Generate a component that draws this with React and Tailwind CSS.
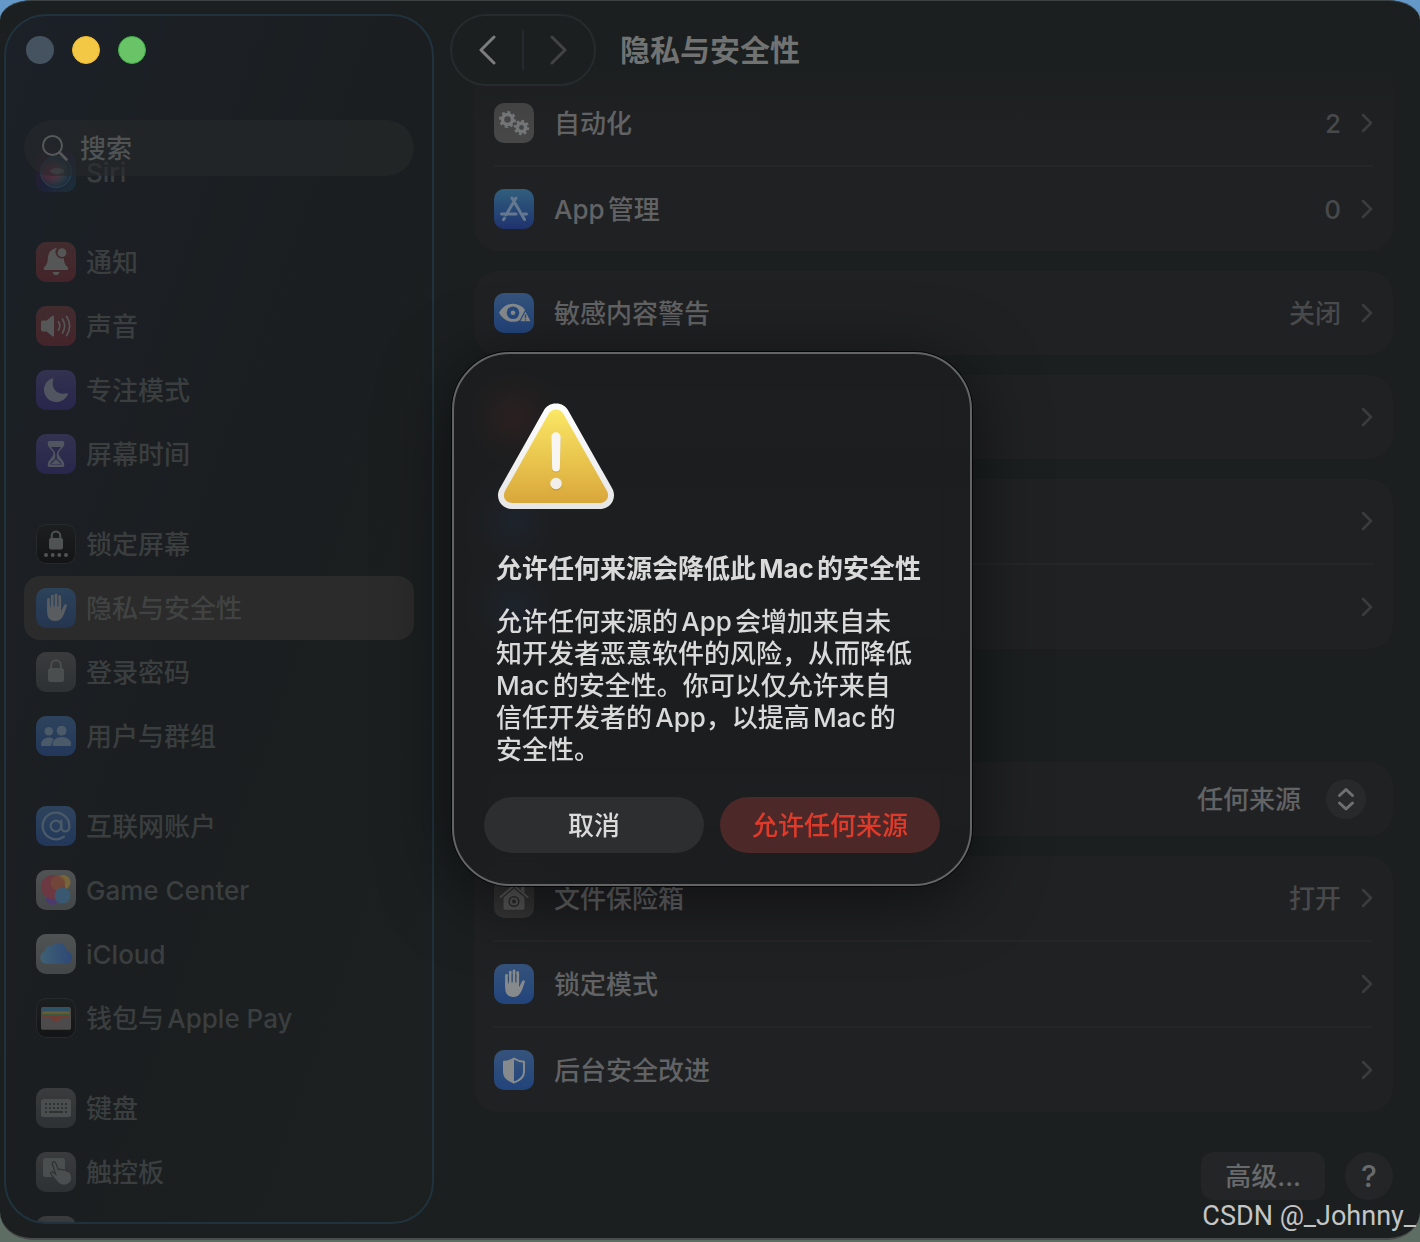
import React, { useState } from 'react';
import { AtSign } from 'lucide-react';
import clsx from 'clsx';

const BellIcon = () => (
    <g fill="currentColor">
        <path d="M18.6 6.6c.8-.5 1.6-.6 2.3-.5a6.4 6.4 0 0 0 5.6 10.3c.5 0 1-.1 1.4-.2.2 5.6 1.6 6.7 3.6 8.9 1.300 1.500.6 3-.8 3H9.200c-1.500 0-2.200-1.500-.9-3 2.600-2.800 3.300-4.200 3.600-9.400.3-4.200 2.400-7.800 6.700-9.100z" />
        <path d="M16.5 30h7c-.5 2-1.8 3.100-3.500 3.100s-3-1.100-3.500-3.100z" />
        <circle cx="26" cy="10.7" r="4.4" />
    </g>
);

const SpeakerIcon = () => (
    <>
        <path fill="currentColor" d="M7 14.500h3.600l5.600-4.700c.9-.7 1.800-.3 1.800.9v18.600c0 1.200-.9 1.600-1.800.9l-5.600-4.700H7c-1.300 0-2-.7-2-2v-7c0-1.300.7-2 2-2z" />
        <path fill="none" stroke="currentColor" strokeWidth="1.7" strokeLinecap="round" d="M22.500 15.800c1.700 2.800 1.700 5.600 0 8.400M26.500 13c2.800 4.600 2.800 9.400 0 14M30.600 10.500c4 6.300 4 12.700 0 19" />
    </>
);

const MoonIcon = () => (
    <path fill="currentColor" d="M16.500 8.200c.6-.2 1.100.2.8 1C14.600 18.500 21 25.500 31 23.200c.8-.2 1.200.4.9 1C29.900 28.900 25.500 32 20.300 32 13.400 32 8 26.600 8 19.800c0-5.400 3.400-10 8.500-11.600z" />
);

const HourglassIcon = () => (
    <>
        <path fill="currentColor" d="M13.500 7h13c1.400 0 1.800 1 1.800 2 0 5.500-5.800 7.200-5.800 10.800S28.300 26 28.300 31c0 1-.4 2-1.800 2h-13c-1.400 0-1.800-1-1.800-2 0-5 5.800-7.600 5.800-11.200S11.700 14.500 11.700 9c0-1 .4-2 1.800-2z" />
        <path fill="#2a294c" d="M15 13h10c-1 2-3.600 3.300-4.200 6.500v4.200c.8 2.500 4.400 3.400 5.100 6.800H14.100c.7-3.400 4.300-4.300 5.100-6.800v-4.200C18.600 16.300 16 15 15 13z" />
        <path fill="currentColor" d="M20 25l5 5H15z" />
    </>
);

const LockScreenIcon = () => (
    <>
        <rect x="13" y="14" width="14" height="11.5" rx="2" fill="currentColor" />
        <path fill="none" stroke="currentColor" strokeWidth="2" d="M15.700 15v-3.300a4.300 4.300 0 0 1 8.600 0V15" />
        <g fill="currentColor">
            <circle cx="10" cy="31" r="2" />
            <circle cx="16.7" cy="31" r="2" />
            <circle cx="23.3" cy="31" r="2" />
            <circle cx="30" cy="31" r="2" />
        </g>
    </>
);

const HandIcon = () => (
    <>
        <path fill="none" stroke="currentColor" strokeWidth="2.8" strokeLinecap="round" d="M12.500 11.500V22M16.300 8.200V20M20 7V20M23.700 8.700V20" />
        <path fill="currentColor" d="M11.200 17.500h13.800v5.700c1.100-1.700 2.300-4.700 3.300-6.300.9-1.300 3-.7 2.500.9-1.100 3.600-2.400 8.100-4.400 11.200-1.600 2.700-4 4-7.200 4-5 0-8-3.300-8-8.500z" />
        <path fill="none" stroke="#2c4563" strokeWidth=".7" d="M14.400 12v7.500M18.100 10v9M21.900 10v9" />
    </>
);

const LockIcon = () => (
    <>
        <rect x="12" y="16" width="16" height="14" rx="2.5" fill="currentColor" />
        <path fill="none" stroke="currentColor" strokeWidth="2" d="M15.200 17v-4a4.800 4.800 0 0 1 9.600 0v4" />
    </>
);

const UsersIcon = () => (
    <g fill="currentColor">
        <circle cx="12.8" cy="15.3" r="4.3" />
        <circle cx="25.6" cy="14.7" r="4.9" />
        <path d="M5 28.500c0-3.700 3.500-7 7.800-7 1.900 0 3.600.6 5 1.700-1.600 1.600-2.500 3.900-2.500 6.800H6.500c-1 0-1.500-.5-1.500-1.500z" />
        <path d="M16.500 28.300c0-4.300 4.100-7.400 9.300-7.400s9.400 3.100 9.400 7.400c0 1.200-.5 1.700-1.700 1.700H18.200c-1.200 0-1.700-.5-1.700-1.700z" />
    </g>
);

const GameCenterIcon = () => (
    <>
        <circle cx="27" cy="12.5" r="7.5" fill="#77663a" />
        <circle cx="16" cy="29" r="6" fill="#4b3a6e" />
        <circle cx="17" cy="17" r="12" fill="#6c3842" />
        <circle cx="22" cy="13" r="7.5" fill="#754c36" opacity=".7" />
        <circle cx="26.5" cy="25.5" r="8" fill="#395a74" opacity=".95" />
    </>
);

const CloudIcon = () => (
    <>
        <defs>
            <linearGradient id="cloud" x1="0" x2="1">
                <stop offset="0" stopColor="#3f6074" />
                <stop offset="1" stopColor="#2e4876" />
            </linearGradient>
        </defs>
        <path fill="url(#cloud)" d="M11.500 30C7.300 30 4.300 27.200 4.300 23.500c0-3 1.800-5.300 4.400-6.200.2-3.200 2.500-5.300 5.400-5.300.7 0 1.300.1 1.900.3 1.400-2.200 3.600-3.500 6.300-3.500 4.600 0 7.900 3.300 8.200 7.800 3.400.7 5.500 3.200 5.500 6.400 0 4-2.900 7-7 7z" />
    </>
);

const WalletIcon = () => (
    <>
        <rect x="5" y="9" width="30" height="22.5" rx="2" fill="#4c4a4b" />
        <path fill="#2f5266" d="M6.500 10h27v4h-27z" />
        <path fill="#6b5f33" d="M6.500 13.500h27V17h-27z" />
        <path fill="#3e5b40" d="M6.500 15.500h27v2h-27z" />
        <path fill="#6d3c34" d="M6.500 17.200h27v7h-27z" />
        <path fill="#4c4a4b" d="M5 20h8c2.500 0 3.200 3.800 7 3.800s4.500-3.800 7-3.800h8v10c0 1-.6 1.500-1.500 1.500h-27C5.600 31.500 5 31 5 30z" />
    </>
);

const KeyboardIcon = () => (
    <>
        <rect x="5" y="11" width="30" height="18" rx="2.5" fill="currentColor" />
        <path stroke="#303335" strokeWidth="2" strokeDasharray="2 2" d="M9 16h22M9 20h22" />
        <path stroke="#303335" strokeWidth="2" d="M9 24h2M13 24h14M29 24h2" />
    </>
);

const TrackpadIcon = () => (
    <>
        <rect x="7" y="6" width="22" height="19" rx="2.5" fill="currentColor" />
        <path fill="currentColor" stroke="#303335" strokeWidth="1.2" d="M16.400 12.200c-.8-2.400 2.400-3.500 3.300-1.200l2.600 6.700c.9-.9 2.300-.8 2.900.2.900-.7 2.200-.5 2.700.4 1.100-.6 2.300-.2 2.900.9l.8-.1c1.800-.1 2.800 1.300 3.500 3.300 1.700 5-.1 8.900-4.600 10.500-4.400 1.500-7.200-.4-9.500-3.300-1.900-2.400-4.300-5-6.100-7.400-1.200-1.700.7-3 2.200-1.900l2.600 2z" />
    </>
);

const GearShape = ({ cx, cy, r }) => (
    <>
        <circle cx={cx} cy={cy} r={r} fill="none" stroke="currentColor" strokeWidth="3.5" />
        <circle cx={cx} cy={cy} r={r + 2.2} fill="none" stroke="currentColor" strokeWidth="2.6" pathLength="16" strokeDasharray="1 1" />
    </>
);

const GearsIcon = () => (
    <>
        <GearShape cx={13.5} cy={16.5} r={5} />
        <GearShape cx={27.5} cy={24.5} r={4.2} />
    </>
);

const AppStoreIcon = () => (
    <path fill="none" stroke="currentColor" strokeWidth="3" strokeLinecap="round" d="M18 9L30.500 30.500M22 9L12 26M10.400 29.200l-.9 1.500M7.500 25h14.500M29.500 25h3" />
);

const EyeIcon = () => (
    <>
        <path fill="currentColor" d="M5 19.700C8 14.200 13 10.700 19 10.700s11 3.500 14 9c-3 5.600-8 9.100-14 9.100S8 25.300 5 19.700z" />
        <circle cx="19" cy="19.7" r="6.3" fill="#26497c" />
        <circle cx="19" cy="19.7" r="2.3" fill="currentColor" />
        <path fill="currentColor" stroke="#26497c" strokeWidth="1.2" strokeLinejoin="round" d="M31.500 17.500l6 11.300H25.500z" />
        <path stroke="#26497c" strokeWidth="1.3" d="M31.500 21.500v3.700M31.500 26.300v1.300" />
    </>
);

const VaultIcon = () => (
    <>
        <path fill="none" stroke="currentColor" strokeWidth="2" strokeLinecap="round" strokeLinejoin="round" d="M6.500 19L20 7.500 33.500 19" />
        <path fill="currentColor" d="M27 9h3.500v6L27 12zM20 10.500l10.500 9V30c0 1.200-.6 1.800-1.800 1.800H11.300c-1.200 0-1.800-.6-1.800-1.800V19.500z" />
        <circle cx="20" cy="23.5" r="4.8" fill="none" stroke="#2c2c2d" strokeWidth="1.5" />
        <circle cx="20" cy="23.5" r="2" fill="#2c2c2d" />
    </>
);

const ShieldIcon = () => (
    <>
        <path fill="none" stroke="currentColor" strokeWidth="2" strokeLinejoin="round" d="M20 8.500c3 2 6.300 3 10 3.300V22c0 5-4 8.300-10 10.500C14 30.300 10 27 10 22V11.800c3.700-.3 7-1.300 10-3.300z" />
        <path fill="currentColor" d="M20 8.500V32.500C14 30.300 10 27 10 22V11.800c3.700-.3 7-1.300 10-3.300z" />
    </>
);

const SiriIcon = () => (
    <>
        <defs>
            <radialGradient id="siri">
                <stop offset="0" stopColor="#5d6668" />
                <stop offset=".3" stopColor="#37444a" />
                <stop offset="1" stopColor="#1c2c3c" />
            </radialGradient>
            <radialGradient id="siri-pink" cx=".3" cy=".5" r=".5">
                <stop offset="0" stopColor="#5a2438" />
                <stop offset="1" stopColor="#5a2438" stopOpacity="0" />
            </radialGradient>
        </defs>
        <circle cx="20" cy="20" r="15.5" fill="url(#siri)" stroke="#2c4450" strokeWidth="1" />
        <circle cx="20" cy="20" r="15" fill="url(#siri-pink)" />
        <ellipse cx="21" cy="19" rx="7" ry="3" fill="#5d6668" opacity=".7" />
    </>
);

const TILES = {
    siri: 'bg-linear-to-br from-[#2e1b26] via-[#1e2038] to-[#1b3038] text-[#555a5b]',
    red: 'bg-linear-to-b from-[#412c2e] to-[#44242a] text-[#555656]',
    purple: 'bg-linear-to-b from-[#33324f] to-[#28264c] text-[#515560]',
    black: 'bg-linear-to-b from-[#1c1f20] to-[#131415] text-[#505354] ring-1 ring-inset ring-[#25292b]',
    steel: 'bg-linear-to-b from-[#2c435a] to-[#253550] text-[#5a5d5f]',
    sky: 'bg-linear-to-b from-[#2d435c] to-[#22375a] text-[#4b5a68]',
    gray: 'bg-linear-to-b from-[#393b3d] to-[#2e3133] text-[#4a4e4f]',
    white: 'bg-linear-to-b from-[#4f5354] to-[#434748] text-[#505354]',
    mainGray: 'bg-linear-to-b from-[#424243] to-[#484849] text-[#747576]',
    vault: 'bg-linear-to-b from-[#2e2e2f] to-[#363637] text-[#545554]',
    mainBlue: 'bg-linear-to-b from-[#35537b] to-[#22447c] text-[#868a8c]',
    appStore: 'bg-linear-to-b from-[#315f7c] to-[#20326f] text-[#64788f]',
    hiddenRed: 'bg-[#a03232]',
    hiddenBlue: 'bg-[#2c5a9c]',
};

const Tile = ({ tone, children }) => (
    <span className={clsx('block size-10 shrink-0 overflow-hidden rounded-[10px]', TILES[tone])}>
        <svg viewBox="0 0 40 40" className="size-10" aria-hidden="true">
            {children}
        </svg>
    </span>
);

const SIDEBAR = [
    [{ label: 'Siri', tone: 'siri', icon: <SiriIcon /> }],
    [
        { label: '通知', tone: 'red', icon: <BellIcon /> },
        { label: '声音', tone: 'red', icon: <SpeakerIcon /> },
        { label: '专注模式', tone: 'purple', icon: <MoonIcon /> },
        { label: '屏幕时间', tone: 'purple', icon: <HourglassIcon /> },
    ],
    [
        { label: '锁定屏幕', tone: 'black', icon: <LockScreenIcon /> },
        { label: '隐私与安全性', tone: 'steel', icon: <HandIcon />, active: true },
        { label: '登录密码', tone: 'gray', icon: <LockIcon /> },
        { label: '用户与群组', tone: 'sky', icon: <UsersIcon /> },
    ],
    [
        { label: '互联网账户', tone: 'sky', icon: <AtSign x="4" y="4" width="32" height="32" strokeWidth={1.7} /> },
        { label: 'Game Center', tone: 'white', icon: <GameCenterIcon /> },
        { label: 'iCloud', tone: 'white', icon: <CloudIcon /> },
        { label: '钱包与Apple Pay', tone: 'black', icon: <WalletIcon /> },
    ],
    [
        { label: '键盘', tone: 'gray', icon: <KeyboardIcon /> },
        { label: '触控板', tone: 'gray', icon: <TrackpadIcon /> },
        { label: '', tone: 'gray', icon: null },
    ],
];

const Chevron = () => (
    <svg viewBox="0 0 12 20" className="h-5 w-3 shrink-0 text-[#3b3c3e]" aria-hidden="true">
        <path d="M2 2l8 8-8 8" fill="none" stroke="currentColor" strokeWidth="2.5" strokeLinecap="round" strokeLinejoin="round" />
    </svg>
);

const Row = ({ label, value, tone, icon }) => (
    <a href="#" className="box-content flex h-[84px] items-center">
        <Tile tone={tone}>{icon}</Tile>
        <span className="ml-5 flex-1 text-[#626365]">{label}</span>
        <span className="mr-5 text-[#48494b]">{value}</span>
        <Chevron />
    </a>
);

const Card = ({ className, children }) => (
    <section className={clsx('divide-y-2 divide-[#252628] bg-[#202123] px-5', className)}>{children}</section>
);

const Sidebar = () => {
    const [query, setQuery] = useState('');

    return (
        <aside className="relative mt-[13px] mb-3.5 ml-1 flex w-[430px] shrink-0 flex-col overflow-hidden rounded-[42px] border-2 border-[#20323d] bg-linear-to-br from-[#1b2128] via-[#1b1e20] to-[#1c201f]">
            <div className="flex gap-[18px] px-5 pt-5">
                <button aria-label="关闭窗口" className="size-7 rounded-full bg-[#455260]" />
                <button aria-label="最小化" className="size-7 rounded-full border border-[#f0b92d] bg-[#f3c845]" />
                <button aria-label="缩放" className="size-7 rounded-full border border-[#3fae49] bg-[#68c467]" />
            </div>

            <nav className="mt-[76px] flex min-h-0 flex-1 flex-col gap-[26px] overflow-hidden px-[18px]">
                {SIDEBAR.map((group, i) => (
                    <ul key={i}>
                        {group.map((item) => (
                            <li key={item.label}>
                                <a
                                    href="#"
                                    className={clsx(
                                        'flex h-16 items-center gap-2.5 rounded-2xl px-3 text-[#3a3e3f]',
                                        item.active && 'bg-[#2a2b2a] text-[#414342]'
                                    )}
                                >
                                    <Tile tone={item.tone}>{item.icon}</Tile>
                                    {item.label}
                                </a>
                            </li>
                        ))}
                    </ul>
                ))}
            </nav>

            {/* The search field floats above the scrolled list */}
            <label className="absolute inset-x-[18px] top-[104px] flex h-14 items-center gap-3 rounded-full bg-[#262a2b]/60 px-[18px]">
                <svg viewBox="0 0 26 26" className="size-[26px] shrink-0 text-[#56595a]" aria-hidden="true">
                    <circle cx="10.5" cy="10.5" r="9.5" fill="none" stroke="currentColor" strokeWidth="2" />
                    <path d="M17.500 17.500l7 7" stroke="currentColor" strokeWidth="2.6" strokeLinecap="round" />
                </svg>
                <input
                    type="text"
                    aria-label="搜索"
                    value={query}
                    onChange={(e) => setQuery(e.target.value)}
                    placeholder="搜索"
                    className="w-full bg-transparent outline-none placeholder:text-[#505354]"
                />
            </label>
        </aside>
    );
};

const Header = () => (
    <header className="absolute inset-x-0 top-0 flex items-center gap-6 pt-[13px] pl-4">
        <div className="flex h-[72px] w-[146px] items-center rounded-full border-2 border-[#262b2d] bg-[#1c1f20]">
            <button aria-label="后退" className="flex flex-1 justify-center text-[#7b7d7e]">
                <svg viewBox="0 0 18 30" className="h-[30px] w-[18px]">
                    <path d="M16 2L3 15l13 13" fill="none" stroke="currentColor" strokeWidth="3" strokeLinecap="round" strokeLinejoin="round" />
                </svg>
            </button>
            <span className="h-10 w-0.5 bg-[#25282c]" />
            <button aria-label="前进" className="flex flex-1 justify-center text-[#414344]">
                <svg viewBox="0 0 18 30" className="h-[30px] w-[18px]">
                    <path d="M2 2l13 13L2 28" fill="none" stroke="currentColor" strokeWidth="3" strokeLinecap="round" strokeLinejoin="round" />
                </svg>
            </button>
        </div>
        <h1 className="text-[30px] font-bold text-[#717373]">隐私与安全性</h1>
    </header>
);

const WarningIcon = () => (
    <svg viewBox="0 0 120 108" className="ml-3 h-[108px] w-[120px]" role="img" aria-label="警告">
        <defs>
            <linearGradient id="rim" x1="0" y1="0" x2="0" y2="1">
                <stop offset="0" stopColor="#ffffff" />
                <stop offset="1" stopColor="#e6e6e6" />
            </linearGradient>
            <linearGradient id="face" x1="0" y1="0" x2="0" y2="1">
                <stop offset="0" stopColor="#fbe765" />
                <stop offset="1" stopColor="#d9a73a" />
            </linearGradient>
        </defs>
        <path fill="url(#rim)" d="M47.500 9C50 4 54.500 1.500 60 1.500S70 4 72.500 9L116.500 87c4.500 9-1.500 20-12.500 20H16C5 107-1 96 3.500 87z" />
        <path fill="url(#face)" d="M52.500 12c1.700-3 4.300-4.500 7.500-4.500s5.800 1.500 7.500 4.500L111 89c3 6-.5 12-7.500 12h-87c-7 0-10.500-6-7.500-12z" />
        <path fill="#b48a2a" opacity=".5" d="M55.300 36a4.700 4.700 0 0 1 9.400 0l-.8 30.500a3.900 3.900 0 0 1-7.800 0z" />
        <circle cx="60" cy="83" r="5.8" fill="#b48a2a" opacity=".5" />
        <path fill="#f7f6f2" d="M55.300 35a4.700 4.700 0 0 1 9.400 0l-.8 30.500a3.900 3.900 0 0 1-7.800 0z" />
        <circle cx="60" cy="81.5" r="5.8" fill="#f0efeb" />
    </svg>
);

const ConfirmDialog = () => (
    <div className="absolute inset-0 flex items-center justify-center pb-1 pl-1">
        <div
            role="alertdialog"
            aria-labelledby="dialog-title"
            aria-describedby="dialog-body"
            className="w-[520px] rounded-[58px] border-2 border-[#626466] bg-[#1c1d1e]/85 px-[30px] pt-12 pb-[31px] text-[#dadadb] shadow-[0_0_0_1px_#050505,0_12px_70px_rgba(0,0,0,0.55)] backdrop-blur-lg"
        >
            <WarningIcon />
            <h2 id="dialog-title" className="mt-[43px] ml-3 leading-8 font-bold">
                允许任何来源会降低此Mac的安全性
            </h2>
            <p id="dialog-body" className="mt-[21px] ml-3 leading-8 whitespace-nowrap">
                允许任何来源的App会增加来自未
                <br />
                知开发者恶意软件的风险，从而降低
                <br />
                Mac的安全性。你可以仅允许来自
                <br />
                信任开发者的App，以提高Mac的
                <br />
                安全性。
            </p>
            <div className="mt-[31px] flex gap-4">
                <button className="h-14 flex-1 rounded-full bg-[#2d2e2f]">取消</button>
                <button className="h-14 flex-1 rounded-full bg-[#4c2928] text-[#e03a2a]">允许任何来源</button>
            </div>
        </div>
    </div>
);

const App = () => {
    const [source, setSource] = useState('any');

    return (
        <div className="relative h-screen overflow-hidden bg-linear-to-b from-[#6398c8] to-[#5d6d63] pb-0.5 font-['Inter','Noto_Sans_CJK_SC',sans-serif] text-[26px] font-medium [text-autospace:normal]">
            <div className="flex h-full overflow-hidden rounded-tl-[32px_20px] rounded-tr-[32px_20px] rounded-br-[32px_28px] rounded-bl-[32px_28px] border-t border-b-2 border-t-[#3c4142] border-b-[#4a4b4b] bg-[#1b1f20]">
                <Sidebar />

                <main className="relative min-w-0 flex-1 overflow-hidden pt-[63px] pr-[27px] pl-10">
                    <div className="flex flex-col gap-5">
                        <Card className="rounded-b-3xl bg-linear-to-b from-[#1c1f20] to-[#202123] to-40% pt-[17px]">
                            <Row label="自动化" value="2" tone="mainGray" icon={<GearsIcon />} />
                            <Row label="App管理" value="0" tone="appStore" icon={<AppStoreIcon />} />
                        </Card>
                        <Card className="rounded-3xl">
                            <Row label="敏感内容警告" value="关闭" tone="mainBlue" icon={<EyeIcon />} />
                        </Card>
                        <Card className="rounded-3xl">
                            <Row tone="hiddenRed" />
                        </Card>
                        <Card className="rounded-3xl">
                            <Row tone="hiddenBlue" />
                            <Row tone="hiddenBlue" />
                        </Card>
                        <Card className="mt-[93px] rounded-3xl">
                            <div className="flex h-[74px] items-center justify-end gap-6 pr-[7px]">
                                <select
                                    aria-label="允许以下来源的应用程序"
                                    value={source}
                                    onChange={(e) => setSource(e.target.value)}
                                    className="appearance-none bg-transparent text-[#626365] outline-none"
                                >
                                    <option value="any">任何来源</option>
                                </select>
                                <svg viewBox="0 0 40 40" className="size-10 rounded-full bg-[#28292b] text-[#6f7071]" aria-hidden="true">
                                    <path d="M13.500 16.500L20 10.500l6.500 6M13.500 24L20 30l6.500-6" fill="none" stroke="currentColor" strokeWidth="3" strokeLinecap="round" strokeLinejoin="round" />
                                </svg>
                            </div>
                        </Card>
                        <Card className="rounded-3xl">
                            <Row label="文件保险箱" value="打开" tone="vault" icon={<VaultIcon />} />
                            <Row label="锁定模式" tone="mainBlue" icon={<HandIcon />} />
                            <Row label="后台安全改进" tone="mainBlue" icon={<ShieldIcon />} />
                        </Card>
                        <div className="mt-5 flex justify-end gap-5 text-[#68696a]">
                            <button className="h-12 rounded-xl bg-[#242527] px-6">高级...</button>
                            <button aria-label="帮助" className="size-12 rounded-full bg-[#242527] text-[30px] leading-none">
                                ?
                            </button>
                        </div>
                    </div>
                    <Header />
                </main>
            </div>

            <ConfirmDialog />

            <p className="absolute right-1 bottom-2 font-['Roboto',sans-serif] text-[27px] leading-9 font-normal text-[#c4c5c5]">CSDN @_Johnny_</p>
        </div>
    );
};

export default App;
